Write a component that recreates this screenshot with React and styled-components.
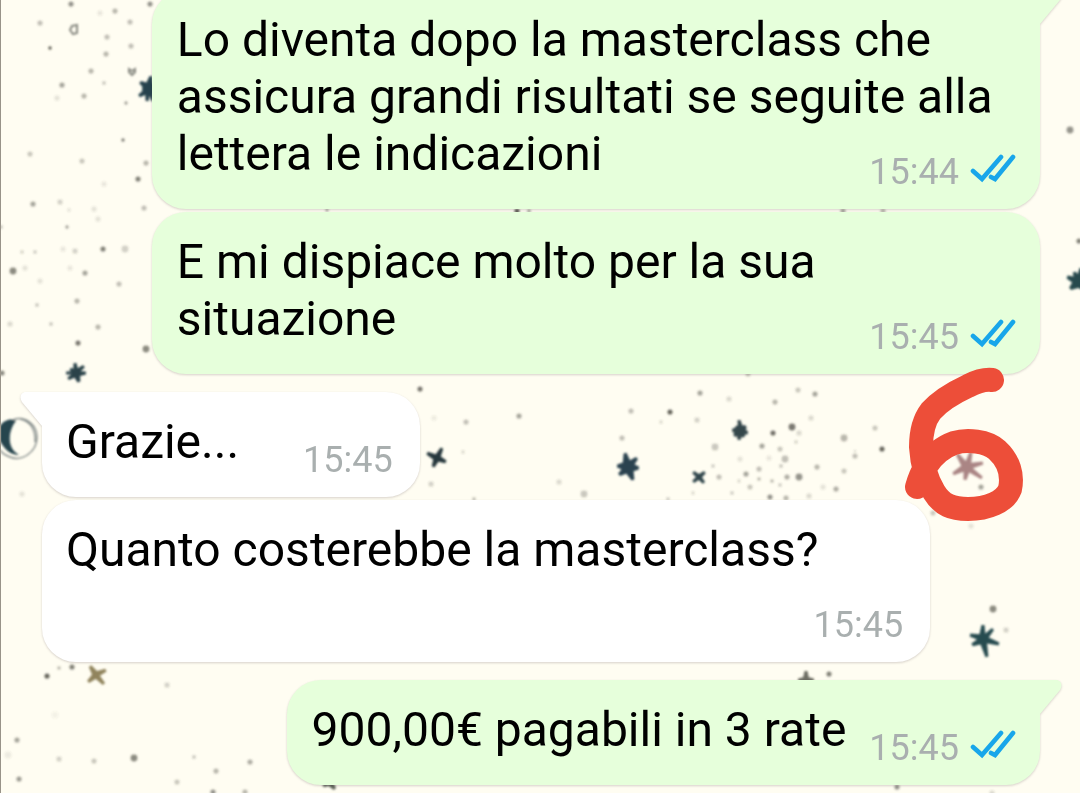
import React from "react";
import styled, { createGlobalStyle } from "styled-components";

const GlobalStyle = createGlobalStyle`
  * {
    box-sizing: border-box;
  }

  body {
    margin: 0;
    font-family: Roboto, "Noto Sans", sans-serif;
  }
`;

const StyledChat = styled.main`
  position: relative;
  display: flex;
  flex-direction: column;
  justify-content: flex-end;
  height: 100vh;
  padding: 0 40px 8px 41px;
  overflow: hidden;
  background-color: #fffdf2;
  border-left: 1px solid #989389;
`;

const StyledWallpaper = styled.svg`
  position: absolute;
  inset: 0;
  width: 100%;
  height: 100%;
`;

const StyledMessages = styled.ol`
  position: relative;
  display: flex;
  flex-direction: column;
  margin: 0;
  padding: 0;
  list-style: none;
`;

const StyledBubble = styled.li`
  position: relative;
  flex-shrink: 0;
  align-self: ${(props) => (props.$sent ? "flex-end" : "flex-start")};
  max-width: 89%;
  margin-top: ${(props) => (props.$tail ? "18px" : "3px")};
  padding: ${(props) =>
    props.$sent ? "21px 24px 27px 25px" : "21px 27px 27px 24px"};
  border-radius: 34px;
  border-top-left-radius: ${(props) =>
    props.$tail && !props.$sent ? "0" : "34px"};
  border-top-right-radius: ${(props) =>
    props.$tail && props.$sent ? "0" : "34px"};
  background-color: ${(props) => (props.$sent ? "#e6ffdb" : "#ffffff")};
  filter: drop-shadow(0 1px 1px rgba(70, 50, 60, 0.22));
`;

const StyledTail = styled.svg`
  position: absolute;
  top: 0;
  left: ${(props) => (props.$sent ? "auto" : "-22px")};
  right: ${(props) => (props.$sent ? "-22px" : "auto")};
  width: 23px;
  height: 36px;
  fill: ${(props) => (props.$sent ? "#e6ffdb" : "#ffffff")};
`;

const StyledText = styled.div`
  display: flow-root;
  color: #000000;
  font-size: 48px;
  line-height: 57px;
`;

/* floats at the end of the last line, or below it when there is no room */
const StyledMeta = styled.span`
  float: right;
  display: flex;
  align-items: center;
  gap: 11px;
  height: 42px;
  margin: 26px 0 -11px ${(props) => (props.$sent ? "23px" : "64px")};
  color: #a9afaf;
  font-size: 36px;
  line-height: 42px;
`;

const StyledTicks = styled.svg`
  width: 46px;
  height: 30px;
  margin-bottom: 6px;
  fill: none;
  stroke: #18a6ea;
  stroke-width: 4.6;
  stroke-linecap: round;
  stroke-linejoin: miter;
`;

const StyledMarker = styled.svg`
  position: absolute;
  right: 56px;
  bottom: 271px;
  width: 120px;
  height: 155px;
  fill: none;
  stroke: #ed4e39;
  stroke-width: 24;
  stroke-linecap: round;
  stroke-linejoin: round;
`;

const messages = [
  {
    text: "Lo diventa dopo la masterclass che assicura grandi risultati se seguite alla lettera le indicazioni",
    time: "15:44",
    sent: true,
    tail: true,
  },
  {
    text: "E mi dispiace molto per la sua situazione",
    time: "15:45",
    sent: true,
  },
  { text: "Grazie...", time: "15:45", tail: true },
  { text: "Quanto costerebbe la masterclass?", time: "15:45" },
  {
    text: "900,00€ pagabili in 3 rate",
    time: "15:45",
    sent: true,
    tail: true,
  },
];

// x, y, radius, opacity
const dots = [
  [71, 4, 3, 0.6], [150, 4, 3, 0.6], [115, 11, 3, 0.4], [100, 13, 3, 0.12],
  [40, 23, 3, 0.35], [130, 22, 3, 0.35], [107, 37, 3, 0.35], [131, 46, 3, 0.35],
  [50, 48, 2, 0.9], [106, 54, 3, 0.4], [91, 71, 3, 0.4], [104, 83, 2, 0.35],
  [62, 85, 3, 0.5], [84, 96, 3, 0.4], [57, 98, 3, 0.15], [126, 103, 2, 0.5],
  [123, 140, 2, 0.7], [30, 154, 3, 0.3], [82, 161, 3, 0.3], [146, 163, 3, 0.4],
  [138, 179, 3, 0.7], [104, 184, 3, 0.12], [33, 204, 3, 0.5], [60, 202, 3, 0.25],
  [144, 208, 3, 0.35], [94, 209, 3, 0.15], [69, 210, 2, 0.15], [98, 219, 3, 0.15],
  [1, 227, 2, 0.35], [67, 227, 2, 0.5], [103, 249, 3, 0.7], [125, 249, 4, 0.25],
  [75, 251, 3, 0.25], [63, 249, 3, 0.12], [22, 252, 2, 0.25], [35, 252, 2, 0.3],
  [13, 271, 4, 0.65], [25, 268, 3, 0.15], [70, 268, 3, 0.12], [85, 273, 3, 0.5],
  [40, 281, 3, 0.15], [119, 284, 3, 0.35], [77, 301, 3, 0.4], [37, 305, 2, 0.35],
  [51, 324, 2, 0.35], [10, 324, 3, 0.2], [98, 327, 3, 0.4], [78, 343, 3, 0.75],
  [146, 349, 4, 0.65], [2, 373, 3, 0.65], [22, 494, 3, 0.15],
  [420, 389, 3, 0.75], [434, 418, 3, 0.1], [466, 422, 3, 0.35], [463, 452, 2, 0.2],
  [519, 416, 3, 0.5], [431, 484, 3, 0.25], [559, 482, 3, 0.2], [584, 494, 4, 0.3],
  [474, 499, 2, 0.4], [631, 411, 3, 0.35], [622, 438, 3, 0.35], [670, 412, 3, 0.85],
  [661, 422, 2, 0.2], [668, 499, 2, 0.3], [700, 393, 3, 0.5], [729, 399, 3, 0.2],
  [775, 402, 3, 0.4], [798, 390, 3, 0.3], [815, 394, 3, 0.5], [697, 420, 3, 0.25],
  [773, 433, 3, 0.8], [792, 427, 4, 0.75], [799, 433, 3, 0.2], [811, 418, 3, 0.2],
  [715, 447, 4, 0.3], [762, 446, 3, 0.5], [780, 449, 3, 0.3], [796, 442, 2, 0.25],
  [740, 459, 3, 0.15], [769, 458, 3, 0.12], [785, 459, 4, 0.35], [713, 466, 2, 0.3],
  [759, 469, 3, 0.35], [719, 477, 3, 0.35], [746, 474, 3, 0.5], [759, 479, 2, 0.4],
  [739, 481, 2, 0.2], [772, 481, 2, 0.4], [787, 477, 3, 0.45], [799, 477, 4, 0.6],
  [781, 466, 2, 0.35], [780, 485, 2, 0.3], [750, 487, 3, 0.3], [732, 493, 2, 0.3],
  [693, 493, 2, 0.2], [770, 497, 3, 0.6], [786, 498, 3, 0.4], [809, 496, 3, 0.2],
  [823, 487, 3, 0.15], [836, 489, 3, 0.45], [817, 467, 3, 0.4], [844, 471, 3, 0.3],
  [844, 438, 4, 0.4], [875, 428, 3, 0.3], [882, 449, 3, 0.85], [855, 456, 3, 0.35],
  [855, 451, 1, 0.45], [748, 374, 3, 0.3], [981, 487, 3, 0.5], [933, 513, 3, 0.3],
  [971, 526, 3, 0.15], [993, 609, 4, 0.65], [1006, 630, 3, 0.25],
  [1070, 130, 4, 0.6], [1079, 241, 3, 0.7], [517, 211, 3, 0.95], [529, 211, 2, 0.6],
  [843, 211, 3, 0.5], [883, 211, 3, 0.4], [327, 210, 2, 0.5],
  [47, 676, 3, 0.85], [72, 667, 3, 0.7], [59, 668, 2, 0.4], [167, 685, 3, 0.25],
  [55, 715, 4, 0.06], [17, 740, 3, 0.5], [8, 755, 4, 0.1], [59, 759, 3, 0.25],
  [94, 761, 3, 0.3], [134, 758, 4, 0.65], [19, 779, 3, 0.55], [194, 757, 2, 0.35],
  [216, 771, 3, 0.4], [250, 762, 3, 0.45], [177, 782, 3, 0.3], [213, 792, 3, 0.6],
  [245, 792, 3, 0.4], [829, 674, 3, 0.7], [897, 787, 3, 0.6], [992, 793, 3, 0.2],
];

// arms are the tips of the star, clockwise from its centre
const stars = [
  { x: 149, y: 89, color: "#28424d", core: 7, arms: [[2, -13], [10, -5], [10, 6], [4, 12], [-2, 12], [-10, 7], [-7, 0], [-9, -7]] },
  { x: 76, y: 373, color: "#29424a", core: 5, arms: [[-1, -10], [8, -7], [10, 0], [3, 9], [-8, 6], [-10, 0], [-6, -4]] },
  { x: 437, y: 458, color: "#28383d", core: 4, arms: [[5, -10], [9, 4], [-4, 9], [-10, -5]] },
  { x: 628, y: 467, color: "#2b4250", core: 7, arms: [[-3, -14], [9, -9], [11, 1], [5, 13], [-9, 8], [-11, -1]] },
  { x: 740, y: 431, color: "#34464c", core: 6, arms: [[-1, -11], [6, -5], [8, 2], [4, 6], [-1, 9], [-6, 5], [-8, -1], [-4, -5]] },
  { x: 699, y: 477, color: "#30474d", core: 3, arms: [[6, -5], [5, 6], [-6, 5], [-6, -5]] },
  { x: 967, y: 467, color: "#aa8584", core: 6, arms: [[4, -15], [16, -4], [15, 11], [-2, 13], [-14, 7], [-10, -13]] },
  { x: 983, y: 639, color: "#284b50", core: 6, arms: [[0, -14], [10, -10], [16, 5], [4, 18], [-11, 6], [-13, -4]] },
  { x: 1079, y: 281, color: "#28494d", core: 7, arms: [[2, -13], [10, 0], [6, 9], [-9, 8], [-12, -4], [-5, -9]] },
  { x: 96, y: 675, color: "#91845d", core: 4, arms: [[10, -5], [8, 9], [-8, 7], [-6, -9]] },
  { x: 806, y: 680, color: "#6d6d63", core: 4, arms: [[0, -9], [8, 0], [-8, 0]] },
  { x: 329, y: 782, color: "#5d6258", core: 4, arms: [[3, -6], [6, 7], [-6, 4]] },
];

const starPoints = ({ x, y, core, arms }) =>
  arms
    .flatMap(([ax, ay], index) => {
      const [bx, by] = arms[(index + 1) % arms.length];
      let angle = Math.atan2(ay, ax);
      let next = Math.atan2(by, bx);
      if (next < angle) next += Math.PI * 2;
      const middle = (angle + next) / 2;
      const length = Math.hypot(ax, ay);
      const spread = 1.5 / length;
      return [
        [x + length * Math.cos(angle - spread), y + length * Math.sin(angle - spread)],
        [x + length * Math.cos(angle + spread), y + length * Math.sin(angle + spread)],
        [x + core * Math.cos(middle), y + core * Math.sin(middle)],
      ];
    })
    .map((point) => point.map((value) => value.toFixed(1)).join(","))
    .join(" ");

const Wallpaper = () => (
  <StyledWallpaper
    viewBox="1 0 1079 793"
    preserveAspectRatio="xMidYMid slice"
    aria-hidden="true"
  >
    <defs>
      <filter id="soft">
        <feGaussianBlur stdDeviation="1" />
      </filter>
      <filter id="ink">
        <feGaussianBlur stdDeviation="0.9" />
      </filter>
    </defs>
    <g fill="#4f4e47" filter="url(#soft)">
      {dots.map(([x, y, r, opacity]) => (
        <circle key={`${x}-${y}`} cx={x} cy={y} r={r * 0.85} opacity={opacity} />
      ))}
    </g>
    <g fill="none" stroke="#8b8c84" strokeWidth="2" filter="url(#ink)">
      <path d="M77 25v8l-4 1-3-4 2-4z" />
      <path d="M129 69l3 2 3-2v3l-3 3-3-3z" />
    </g>
    <g filter="url(#ink)">
      {stars.map((star) => (
        <polygon
          key={`${star.x}-${star.y}`}
          points={starPoints(star)}
          fill={star.color}
        />
      ))}
      <path
        d="M0 426C4 420 11 418 16 421C11 427 9 435 10 442C11 448 14 452 19 455C11 455 5 450 0 441Z"
        fill="#28454d"
      />
      <path
        d="M13 420C25 415 37 425 37 437C37 452 22 462 10 457C5 455 2 453 0 450M20 419C31 421 36 431 35 442"
        fill="none"
        stroke="#8b9290"
        strokeWidth="1.5"
      />
    </g>
  </StyledWallpaper>
);

const Tail = ({ sent }) => (
  <StyledTail $sent={sent} viewBox="0 0 23 36" aria-hidden="true">
    <path
      d="M0 0H17C22 0 24 5 21 10L1 34H0Z"
      transform={sent ? undefined : "translate(23 0) scale(-1 1)"}
    />
  </StyledTail>
);

const Ticks = () => (
  <StyledTicks viewBox="0 0 46 30" role="img" aria-label="Letto">
    <path d="M3 17L12 25L31 3" />
    <path d="M21 23L25 25L43 3" />
  </StyledTicks>
);

const Message = ({ text, time, sent = false, tail = false }) => (
  <StyledBubble $sent={sent} $tail={tail}>
    {tail && <Tail sent={sent} />}
    <StyledText>
      {text}
      <StyledMeta $sent={sent}>
        <time>{time}</time>
        {sent && <Ticks />}
      </StyledMeta>
    </StyledText>
  </StyledBubble>
);

const App = () => {
  return (
    <>
      <GlobalStyle />
      <StyledChat>
        <Wallpaper />
        <StyledMessages>
          {messages.map((message) => (
            <Message key={message.text} {...message} />
          ))}
        </StyledMessages>
        <StyledMarker viewBox="904 367 120 155" aria-hidden="true">
          <path d="M992 380C984 379 976 382 968 386C953 393 940 401 931 411C924 420 921 434 921 447C922 463 926 479 934 492C942 505 952 509 968 509C987 509 1005 502 1010 489C1013 475 1009 461 997 450C987 441 967 439 954 443C943 447 933 455 926 466C921 474 919 480 917 487" />
        </StyledMarker>
      </StyledChat>
    </>
  );
};

export default App;
